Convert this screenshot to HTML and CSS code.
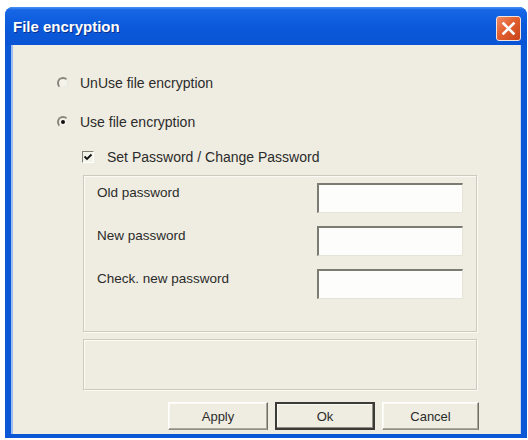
FILE: index.html
```html
<!DOCTYPE html>
<html>
<head>
<meta charset="utf-8">
<link rel="stylesheet" href="styles.css">
</head>
<body>
<div class="window">
  <div class="titlebar">
    <span class="title">File encryption</span>
    <span class="close"><svg width="25" height="25" viewBox="0 0 25 25"><path d="M7.5 7.5 L17.5 17.5 M17.5 7.5 L7.5 17.5" stroke="#fff" stroke-width="2.6" stroke-linecap="square"/></svg></span>
  </div>
  <div class="client">
    <div class="options">
      <div class="opt-row">
        <span class="radio"></span>
        <span>UnUse file encryption</span>
      </div>
      <div class="opt-row second">
        <span class="radio checked"></span>
        <span>Use file encryption</span>
      </div>
      <div class="opt-row check-row">
        <span class="checkbox"><svg width="10" height="10" viewBox="0 0 10 10"><path d="M1.5 4.5 L4 7 L8.5 2.5" fill="none" stroke="#111" stroke-width="1.8"/></svg></span>
        <span>Set Password / Change Password</span>
      </div>
    </div>
    <div class="group">
      <div class="field-row">
        <span class="label">Old password</span>
        <span class="input"></span>
      </div>
      <div class="field-row">
        <span class="label">New password</span>
        <span class="input"></span>
      </div>
      <div class="field-row">
        <span class="label">Check. new password</span>
        <span class="input"></span>
      </div>
    </div>
    <div class="status-box"></div>
    <div class="buttons">
      <button class="btn btn-apply">Apply</button>
      <button class="btn btn-ok">Ok</button>
      <button class="btn btn-cancel">Cancel</button>
    </div>
  </div>
</div>
</body>
</html>
```
FILE: styles.css
```css
body {
  margin: 0;
  background: #fff;
  font-family: "Liberation Sans", Arial, sans-serif;
  font-size: 13px;
  color: #2b2b2b;
}

.window {
  margin: 7px 0 0 5px;
  width: 522px;
  height: 431px;
  display: flex;
  flex-direction: column;
  background: #0a58d6;
  border-radius: 8px 8px 0 0;
}

.titlebar {
  height: 38px;
  flex: none;
  display: flex;
  align-items: center;
  justify-content: space-between;
  padding: 0 6px 0 8px;
  border-radius: 8px 8px 0 0;
  background: linear-gradient(#4a93f6 0, #1666e6 3px, #0b5bdc 45%, #0954d4 100%);
}

.title {
  color: #fff;
  font-family: "Liberation Sans", Arial, sans-serif;
  font-weight: bold;
  font-size: 15px;
  text-shadow: 1px 1px 0 #0a2f8a;
}

.close {
  width: 25px;
  height: 25px;
  margin-top: 5px;
  box-sizing: border-box;
  border: 1px solid #f4e2dc;
  border-radius: 3px;
  background: linear-gradient(135deg, #f08a64 0%, #e2602f 45%, #c8431a 100%);
  display: flex;
  align-items: center;
  justify-content: center;
}

.close svg {
  margin: -1px;
}

.client {
  flex: 1;
  margin: 0 6px 4px 6px;
  background: #efede1;
  box-shadow: inset 2px 0 #9fbdf0, inset -1px 0 #c7d6f2;
  padding-top: 30px;
}

.options {
  padding-left: 46px;
  font-size: 14px;
}

.opt-row {
  height: 16px;
  display: flex;
  align-items: center;
  gap: 11px;
}

.opt-row.second {
  margin-top: 23px;
}

.opt-row.check-row {
  margin-top: 19px;
  padding-left: 25px;
  gap: 13px;
}

.radio {
  width: 12px;
  height: 12px;
  box-sizing: border-box;
  border-radius: 50%;
  border: 2px solid;
  border-color: #86867c #ecebe1 #ecebe1 #86867c;
  background: #f4f3ea;
  display: flex;
  align-items: center;
  justify-content: center;
}

.radio.checked::after {
  content: "";
  width: 4px;
  height: 4px;
  border-radius: 50%;
  background: #111;
}

.checkbox {
  width: 12px;
  height: 12px;
  box-sizing: border-box;
  border: 1px solid;
  border-color: #7f7f76 #ffffff #ffffff #7f7f76;
  background: #f4f3ea;
  display: flex;
  align-items: center;
  justify-content: center;
}

.group {
  margin: 10px 0 0 72px;
  width: 394px;
  height: 157px;
  box-sizing: border-box;
  border: 1px solid #cdcbbd;
  box-shadow: inset 1px 1px #fbfaf4, 1px 1px #fbfaf4;
  padding: 7px 13px 0 13px;
  display: flex;
  flex-direction: column;
  gap: 13px;
}

.field-row {
  height: 30px;
  display: flex;
  justify-content: space-between;
}

.label {
  padding-top: 2px;
  line-height: 16px;
  font-size: 13.5px;
}

.input {
  width: 146px;
  height: 30px;
  box-sizing: border-box;
  background: #fdfdfb;
  border-top: 2px solid #7c7c72;
  border-left: 2px solid #7c7c72;
  border-right: 1px solid #e6e4d8;
  border-bottom: 1px solid #e6e4d8;
}

.status-box {
  margin: 7px 0 0 72px;
  width: 394px;
  height: 51px;
  box-sizing: border-box;
  border: 1px solid #cdcbbd;
  box-shadow: inset 1px 1px #fbfaf4, 1px 1px #fbfaf4;
}

.buttons {
  margin-top: 12px;
  padding-right: 42px;
  display: flex;
  justify-content: flex-end;
  gap: 7px;
}

.btn {
  height: 28px;
  width: 100px;
  box-sizing: border-box;
  font-family: "Liberation Sans", Arial, sans-serif;
  font-size: 13px;
  color: #2b2b2b;
  background: #efede1;
  border: 1px solid;
  border-color: #ffffff #6f6f66 #8f8f86 #ffffff;
  box-shadow: inset -1px -1px #a9a79c, inset 1px 1px #faf9f2;
  padding: 0;
}

.btn-cancel {
  width: 97px;
}

.btn-ok {
  border: 2px solid #3a3a36;
  box-shadow: inset -1px -1px #8f8d84, inset 1px 1px #faf9f2;
}
```
